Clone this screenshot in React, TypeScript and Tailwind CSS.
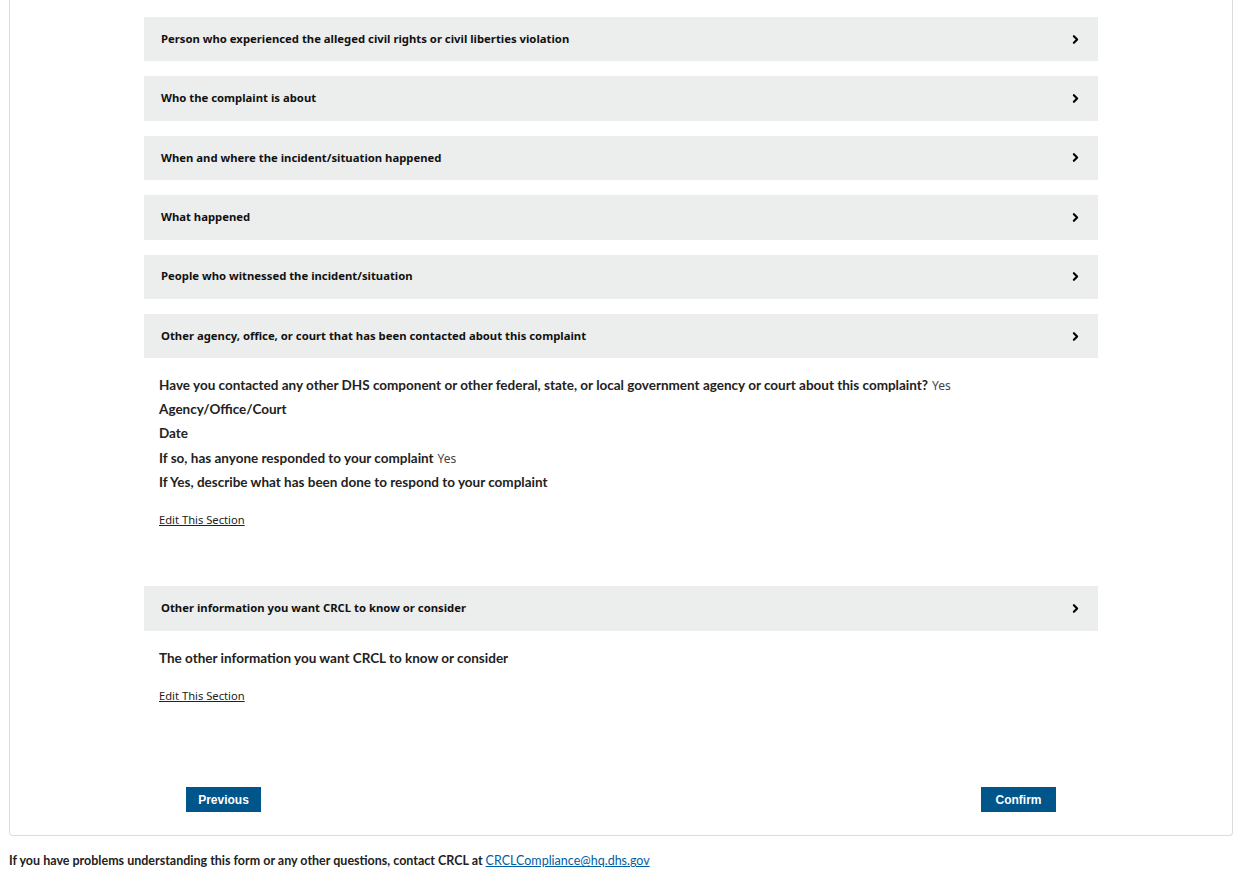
import { ChevronRight } from "lucide-react";

const sections = [
  "Person who experienced the alleged civil rights or civil liberties violation",
  "Who the complaint is about",
  "When and where the incident/situation happened",
  "What happened",
  "People who witnessed the incident/situation",
];

function Header({ title }: { title: string }) {
  return (
    <div className="flex h-[44.4px] items-center justify-between bg-[#eceded] pl-[17px] pr-[16px] font-['Noto_Sans',sans-serif] text-[11.3px] font-bold text-[#111]">
      <span>{title}</span>
      <ChevronRight size={13} strokeWidth={4} className="text-black" />
    </div>
  );
}

function Row({ label, value }: { label: string; value?: string }) {
  return (
    <p className="h-[24.25px] leading-[24.25px]">
      <span className="font-bold">{label}</span>
      {value && <span className="ml-1 font-['Noto_Sans',sans-serif] text-[12px] font-normal text-[#444]">{value}</span>}
    </p>
  );
}

function EditLink() {
  return (
    <a href="#" className="block font-['Noto_Sans',sans-serif] text-[11.2px] leading-[16px] text-[#222] underline">
      Edit This Section
    </a>
  );
}

export default function App() {
  return (
    <div className="min-h-screen bg-white pl-[9px] pr-[5px] font-['Lato',sans-serif] text-[#222]">
      <div className="rounded-b border-x border-b border-[#dcdcdc] pt-[17px] pb-[23px]">
        <div className="mx-auto w-[954px]">
          <div className="flex flex-col gap-[15px]">
            {sections.map((s) => (
              <Header key={s} title={s} />
            ))}
            <Header title="Other agency, office, or court that has been contacted about this complaint" />
          </div>

          <div className="pl-[15px] pt-[14.6px] text-[13.5px]">
            <Row
              label="Have you contacted any other DHS component or other federal, state, or local government agency or court about this complaint?"
              value="Yes"
            />
            <Row label="Agency/Office/Court" />
            <Row label="Date" />
            <Row label="If so, has anyone responded to your complaint" value="Yes" />
            <Row label="If Yes, describe what has been done to respond to your complaint" />
            <div className="mt-[18px]">
              <EditLink />
            </div>
          </div>

          <div className="mt-[58px]">
            <Header title="Other information you want CRCL to know or consider" />
          </div>

          <div className="pl-[15px] pt-[15.6px] text-[13.5px]">
            <Row label="The other information you want CRCL to know or consider" />
            <div className="mt-[18px]">
              <EditLink />
            </div>
          </div>

          <div className="mt-[83px] flex justify-between px-[42px]">
            <button className="h-[25px] w-[75px] bg-[#00558b] font-['Liberation_Sans',sans-serif] text-[12px] font-bold text-white">
              Previous
            </button>
            <button className="h-[25px] w-[75px] bg-[#00558b] font-['Liberation_Sans',sans-serif] text-[12px] font-bold text-white">
              Confirm
            </button>
          </div>
        </div>
      </div>

      <p className="mt-[16px] text-[12.5px] font-bold text-[#222]">
        If you have problems understanding this form or any other questions, contact CRCL at{" "}
        <a href="#" className="font-normal text-[#005ea2] underline">
          CRCLCompliance@hq.dhs.gov
        </a>
      </p>
    </div>
  );
}
